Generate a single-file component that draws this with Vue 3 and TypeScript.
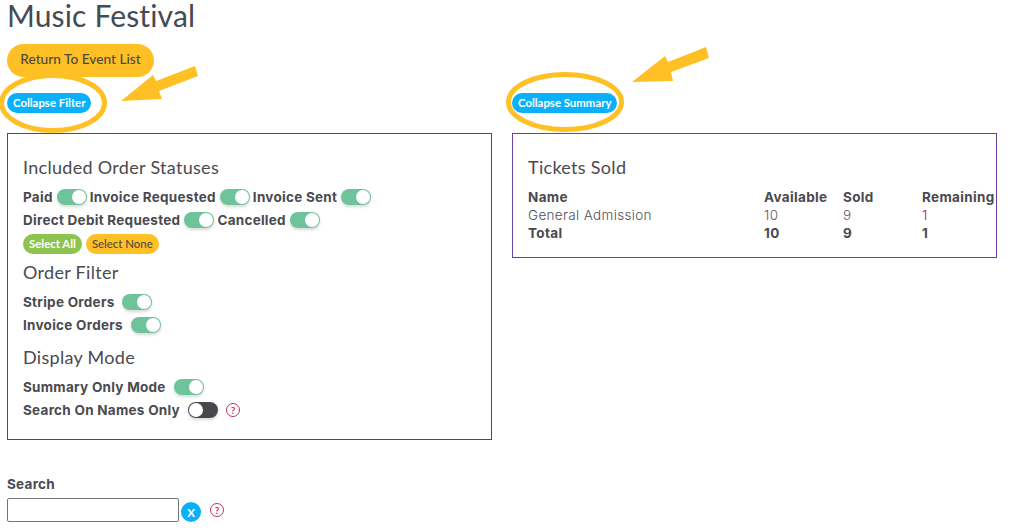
<script setup lang="ts">
interface Toggle { label: string; on: boolean }
const statuses: Toggle[] = [
  { label: 'Paid', on: true },
  { label: 'Invoice Requested', on: true },
  { label: 'Invoice Sent', on: true },
  { label: 'Direct Debit Requested', on: true },
  { label: 'Cancelled', on: true },
]
const filters: Toggle[] = [
  { label: 'Stripe Orders', on: true },
  { label: 'Invoice Orders', on: true },
]
</script>

<template>
  <div class="page">
    <h1 class="title">Music Festival</h1>
    <button class="btn return"><span>Return To Event List</span></button>
    <div class="columns">
      <section class="col">
        <button class="pill blue">Collapse Filter</button>
        <div class="panel filter">
          <h2 class="heading first">Included Order Statuses</h2>
          <div class="wrap">
            <label v-for="s in statuses" :key="s.label" class="item">
              <span class="lbl">{{ s.label }}</span>
              <span class="switch on"><i></i></span>
            </label>
          </div>
          <div class="pills">
            <button class="pill green">Select All</button>
            <button class="pill yellow">Select None</button>
          </div>
          <h2 class="heading">Order Filter</h2>
          <label v-for="f in filters" :key="f.label" class="row">
            <span class="lbl">{{ f.label }}</span>
            <span class="switch on"><i></i></span>
          </label>
          <h2 class="heading mode">Display Mode</h2>
          <label class="row">
            <span class="lbl">Summary Only Mode</span>
            <span class="switch on"><i></i></span>
          </label>
          <label class="row">
            <span class="lbl">Search On Names Only</span>
            <span class="switch off"><i></i></span>
            <span class="help">?</span>
          </label>
        </div>
      </section>
      <section class="col">
        <button class="pill blue">Collapse Summary</button>
        <div class="panel summary">
          <h2 class="heading first">Tickets Sold</h2>
          <table class="tickets">
            <thead>
              <tr><th class="c1">Name</th><th class="c2">Available</th><th class="c3">Sold</th><th>Remaining</th></tr>
            </thead>
            <tbody>
              <tr><td>General Admission</td><td class="num">10</td><td class="num">9</td><td class="num red">1</td></tr>
              <tr class="total"><td>Total</td><td>10</td><td>9</td><td>1</td></tr>
            </tbody>
          </table>
        </div>
      </section>
    </div>
    <div class="search">
      <div class="lbl">Search</div>
      <div class="search-row">
        <input class="input" type="text" />
        <button class="clear">X</button>
        <span class="help">?</span>
      </div>
    </div>

    <svg class="marks" width="1011" height="532" viewBox="0 0 1011 532" aria-hidden="true">
      <g fill="none" stroke="#ffc026" stroke-width="5">
        <ellipse cx="53" cy="103" rx="51.5" ry="27.5" />
        <ellipse cx="565" cy="102" rx="56.5" ry="27.5" />
      </g>
      <g fill="#ffc026">
        <polygon points="121,101 153,75 156,81 195,66 198,76 159,91 162,99" />
        <polygon points="632,82 665,56 668,62 706,47 709,58 671,72 673,81" />
      </g>
    </svg>
  </div>
</template>

<style>
html, body { margin: 0; background: #fff; }
</style>

<style scoped>
.page {
  position: relative;
  width: 1011px;
  height: 532px;
  padding: 0 14px 0 7px;
  box-sizing: border-box;
  color: #4a4a4f;
  font-family: Inter, "Open Sans", sans-serif;
}
.marks { position: absolute; left: 0; top: 0; pointer-events: none; }
.title {
  margin: 0;
  height: 44px;
  font: 400 30px/30px Lato, sans-serif;
  letter-spacing: 0.15px;
  color: #444b53;
}
button { font-family: Lato, sans-serif; border: 0; padding: 0; color: inherit; }
.btn.return {
  display: block;
  width: 147px;
  height: 33px;
  border-radius: 17px;
  background: #ffc026;
  font-size: 13.7px;
  font-weight: 500;
  color: #4f4a3f;
  padding-bottom: 4px;
}
.columns {
  display: grid;
  grid-template-columns: 485px 485px;
  gap: 20px;
  margin-top: 16px;
}
.pill {
  display: block;
  height: 20px;
  border-radius: 10px;
  font-size: 11.4px;
  font-weight: 700;
  padding: 0 0 1px;
  padding-inline: 6px;
}
.blue { background: #0bb0fb; color: #fff; }
.green { background: #8dc44f; color: #fff; }
.yellow { background: #ffc026; color: #4f4a3f; font-weight: 500; }
.panel {
  margin-top: 20px;
  border: 1px solid #5b3d8f;
  box-sizing: border-box;
  padding: 0 15px;
}
.panel.filter { height: 307px; }
.panel.summary { height: 125px; padding-right: 0; border-color: #6a3fa0; }
.heading {
  margin: 0;
  font: 400 18px/22px Lato, sans-serif;
  letter-spacing: 0.3px;
  color: #4a4a50;
  padding-top: 7px;
  padding-bottom: 7px;
}
.heading.first { padding-top: 22px; padding-bottom: 7px; }
.heading.mode { padding-top: 10px; padding-bottom: 7px; }
.wrap { display: flex; flex-wrap: wrap; column-gap: 3px; width: 360px; }
.item, .row { display: flex; align-items: center; height: 23px; }
.lbl {
  font-size: 13.5px;
  font-weight: 700;
  letter-spacing: 0.27px;
  color: #4a4a50;
  white-space: nowrap;
}
.switch {
  position: relative;
  display: inline-block;
  width: 30px;
  height: 16px;
  border-radius: 8px;
  margin-left: 4px;
  box-shadow: 0 2px 3px rgba(0, 0, 0, 0.15);
}
.row .switch { margin-left: 8px; }
.switch.on { background: #6fc39a; }
.switch.off { background: #48484c; }
.switch i {
  position: absolute;
  top: 1px;
  width: 14px;
  height: 14px;
  border-radius: 50%;
  background: #fff;
}
.switch.on i { right: 1px; }
.switch.off i { left: 1px; }
.pills { display: flex; gap: 4px; margin-top: 3px; }
.help {
  display: inline-flex;
  align-items: center;
  justify-content: center;
  box-sizing: border-box;
  width: 14px;
  height: 14px;
  margin-left: 8px;
  border: 1.3px solid #b8365d;
  border-radius: 50%;
  color: #b8365d;
  font: 700 10px/1 Lato, sans-serif;
}
.tickets {
  border-collapse: collapse;
  table-layout: fixed;
  width: 475px;
  margin-top: 3px;
  font-size: 13.5px;
}
.tickets th, .tickets td {
  padding: 0;
  height: 18px;
  text-align: left;
  white-space: nowrap;
  letter-spacing: 0.35px;
}
.c1 { width: 236px; }
.c2 { width: 79px; }
.c3 { width: 79px; }
.tickets td { font-weight: 300; color: #4f4f55; }
.tickets .num { color: #6f5560; }
.tickets .red { color: #a02a50; }
.tickets .total td { font-weight: 700; color: #4a4a50; }
.search { margin-top: 36px; }
.search-row { display: flex; align-items: center; margin-top: 6px; }
.input {
  width: 172px;
  height: 24px;
  box-sizing: border-box;
  border: 1px solid #767676;
  border-radius: 2px;
  padding: 0;
  background: #fff;
}
.clear {
  width: 20px;
  height: 20px;
  border-radius: 50%;
  margin: 4px 0 0 2px;
  background: #0bb0fb;
  color: #fff;
  font-size: 11.5px;
  font-weight: 700;
}
.search-row .help { margin: 0 0 0 9px; }
</style>
